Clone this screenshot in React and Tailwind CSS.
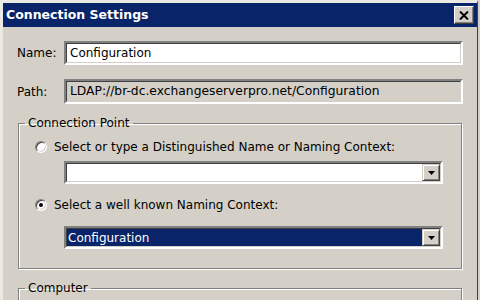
import { useState } from 'react';

const font = { fontFamily: '"DejaVu Sans", Verdana, sans-serif' };

function Sunken({ className = '', children }) {
  return (
    <div className={`border-2 border-t-[#808080] border-l-[#808080] border-b-white border-r-white ${className}`}>
      <div className="h-full border border-t-[#404040] border-l-[#404040] border-b-[#d4d0c8] border-r-[#d4d0c8]">
        {children}
      </div>
    </div>
  );
}

function DropButton() {
  return (
    <div className="w-[18px] h-full bg-[#d4d0c8] border border-t-[#d4d0c8] border-l-[#d4d0c8] border-b-[#404040] border-r-[#404040] shadow-[inset_1px_1px_0_#fff,inset_-1px_-1px_0_#808080] flex items-center justify-center">
      <svg width="7" height="4" viewBox="0 0 7 4">
        <path d="M0 0h7L3.5 4z" fill="#000" />
      </svg>
    </div>
  );
}

function Radio({ checked, label, onClick, className = '' }) {
  return (
    <div className={`flex items-center h-[16px] cursor-default ${className}`} onClick={onClick}>
      <div className="ml-[16px] w-[12px] h-[12px] rounded-full bg-white border border-t-[#808080] border-l-[#808080] border-b-white border-r-white shadow-[inset_1px_1px_0_#404040,inset_-1px_-1px_0_#d4d0c8] flex items-center justify-center">
        {checked && <div className="w-[4px] h-[4px] rounded-full bg-black" />}
      </div>
      <span className="ml-[7px] text-[12px] text-black">{label}</span>
    </div>
  );
}

function Group({ title, className = '', children }) {
  return (
    <fieldset className={`ml-[15px] w-[444px] border border-[#808080] shadow-[1px_1px_0_#fff,inset_1px_1px_0_#fff] ${className}`}>
      <legend className="ml-[6px] px-[3px] text-[12px] leading-[15px] text-black">{title}</legend>
      {children}
    </fieldset>
  );
}

export default function App() {
  const [mode, setMode] = useState('known');

  return (
    <div style={font} className="w-[480px] h-[300px] overflow-hidden bg-[#d4d0c8] text-black">
      <div className="h-full border-t-[3px] border-l-[3px] border-t-[#ebe9e4] border-l-[#ebe9e4] border-r border-r-[#404040] w-[478px] flex flex-col">
        {/* Title bar */}
        <div className="h-[24px] shrink-0 bg-[#0a246a] flex items-center justify-between pl-[3px] pr-[3px]">
          <span className="text-white font-bold text-[12.5px] leading-none">Connection Settings</span>
          <div className="w-[20px] h-[18px] bg-[#d4d0c8] border border-t-white border-l-white border-b-[#404040] border-r-[#404040] shadow-[inset_-1px_-1px_0_#808080] flex items-center justify-center">
            <svg width="10" height="9" viewBox="0 0 10 9">
              <path d="M1 0.5L9 8.5M9 0.5L1 8.5" stroke="#000" strokeWidth="2" />
            </svg>
          </div>
        </div>

        {/* Body */}
        <div className="flex flex-col pt-[14px]">
          <div className="flex items-center pl-[14px]">
            <span className="w-[47px] text-[12px]">Name:</span>
            <Sunken className="w-[399px] h-[24px]">
              <div className="h-full bg-white flex items-center pl-[3px] text-[12px]">Configuration</div>
            </Sunken>
          </div>

          <div className="flex items-center pl-[14px] mt-[14px]">
            <span className="w-[47px] text-[12px]">Path:</span>
            <Sunken className="w-[399px] h-[25px]">
              <div className="h-full flex items-center pl-[3px] text-[12.3px]">LDAP://br-dc.exchangeserverpro.net/Configuration</div>
            </Sunken>
          </div>

          {/* Connection Point */}
          <Group title="Connection Point" className="mt-[12px] h-[153px]">
            <div className="pt-[8px]">
              <Radio
                checked={mode === 'dn'}
                onClick={() => setMode('dn')}
                label="Select or type a Distinguished Name or Naming Context:"
              />
              <Sunken className="ml-[45px] mt-[6px] w-[379px] h-[23px]">
                <div className="h-full flex bg-white">
                  <div className="flex-1" />
                  <DropButton />
                </div>
              </Sunken>

              <Radio
                className="mt-[13px]"
                checked={mode === 'known'}
                onClick={() => setMode('known')}
                label="Select a well known Naming Context:"
              />
              <Sunken className="ml-[45px] mt-[13px] w-[379px] h-[23px]">
                <div className="h-full flex bg-white">
                  <div className="flex-1 bg-[#0a246a] text-white text-[12px] flex items-center pl-[1px]">Configuration</div>
                  <DropButton />
                </div>
              </Sunken>
            </div>
          </Group>

          {/* Computer */}
          <Group title="Computer" className="mt-[12px] h-[40px]" />
        </div>
      </div>
    </div>
  );
}
